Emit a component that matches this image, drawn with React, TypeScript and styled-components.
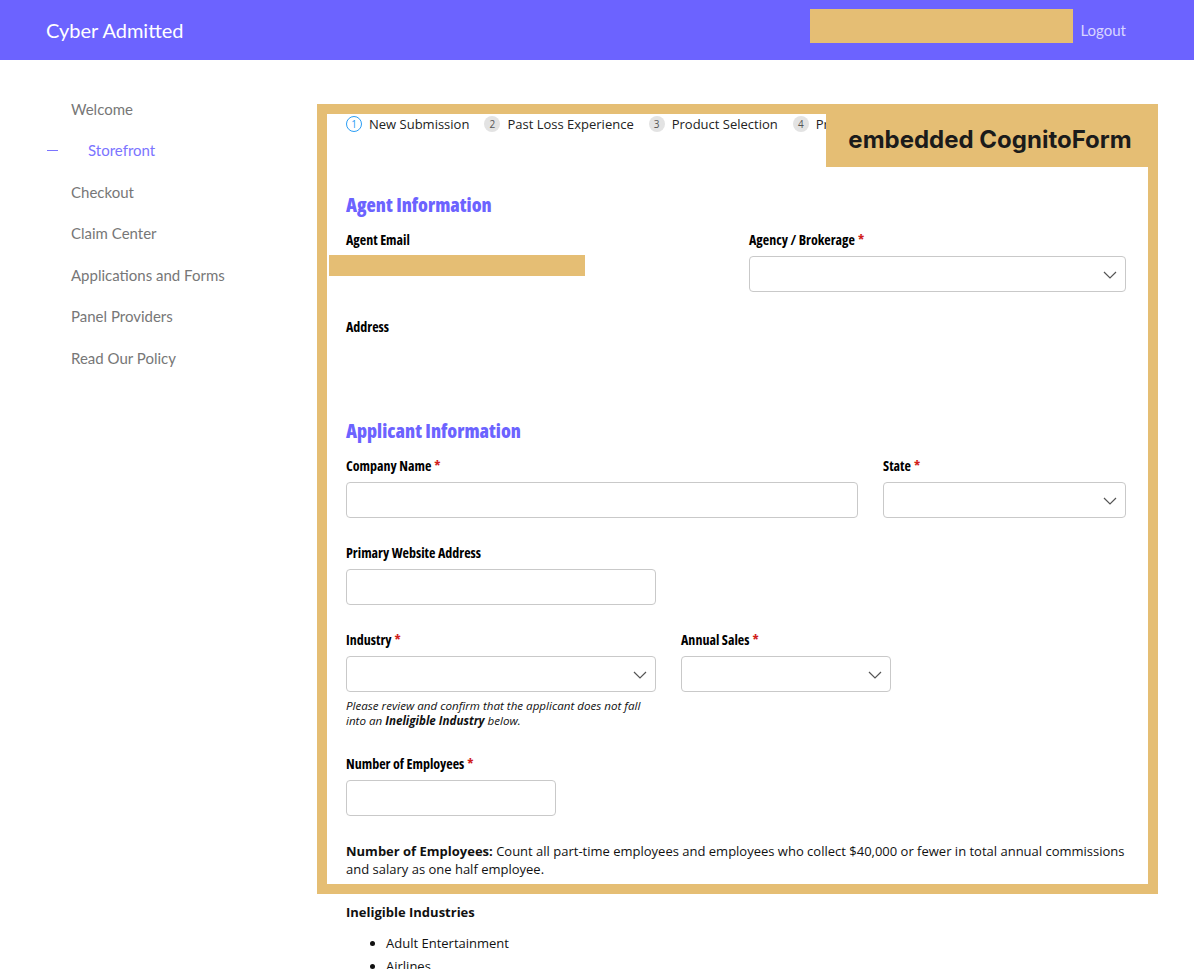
import React from "react";
import styled, { createGlobalStyle } from "styled-components";

const GlobalStyle = createGlobalStyle`
  html, body { margin: 0; padding: 0; background: #fff; }
  body { font-family: Lato, "Open Sans", sans-serif; }
  * { box-sizing: border-box; }
`;

const PURPLE = "#6c63ff";
const GOLD = "#e5be74";
const SANS = `"Open Sans", "Liberation Sans", sans-serif`;

const Header = styled.header`
  height: 60px;
  background: ${PURPLE};
  display: flex;
  align-items: center;
  padding: 0 68px 0 46px;
`;
const Brand = styled.div`
  font-family: Lato, sans-serif;
  font-size: 20px;
  color: #fff;
  flex: 1;
  margin-bottom: 1px;
`;
const Redact = styled.div<{ $w: number; $h: number }>`
  width: ${(p) => p.$w}px;
  height: ${(p) => p.$h}px;
  background: ${GOLD};
  margin-top: -8px;
`;
const Logout = styled.a`
  font-family: Lato, sans-serif;
  font-size: 15px;
  color: #d9d6ff;
  margin-left: 7px;
`;

const Body = styled.div`
  display: flex;
  align-items: flex-start;
`;
const Sidebar = styled.nav`
  width: 317px;
  flex: none;
  padding-top: 28px;
  display: flex;
  flex-direction: column;
`;
const NavItem = styled.div<{ $active?: boolean }>`
  height: 41.5px;
  display: flex;
  align-items: center;
  font-family: Lato, sans-serif;
  font-size: 15px;
  color: ${(p) => (p.$active ? "#7b74ff" : "#777")};
  padding-left: ${(p) => (p.$active ? "47px" : "71px")};
`;
const Dash = styled.span`
  width: 11px;
  height: 1px;
  background: #7b74ff;
  margin-right: 30px;
`;

const Main = styled.main`
  width: 841px;
  margin-top: 44px;
`;
const Frame = styled.div`
  position: relative;
  border: 10px solid ${GOLD};
  font-family: ${SANS};
  color: #000;
`;
const FrameInner = styled.div`
  padding: 0 22px 6px 19px;
`;
const EmbedTag = styled.div`
  position: absolute;
  top: -10px;
  right: -10px;
  width: 332px;
  height: 63px;
  background: ${GOLD};
  display: flex;
  align-items: center;
  justify-content: center;
  font-family: Inter, sans-serif;
  font-weight: 700;
  font-size: 24px;
  color: #1b1b1b;
  padding: 8px 4px 0 0;
`;

const Stepper = styled.div`
  height: 20px;
  display: flex;
  align-items: center;
  gap: 15px;
  font-family: ${SANS};
  font-size: 13px;
  color: #222;
  white-space: nowrap;
  overflow: hidden;
`;
const Step = styled.div`
  display: flex;
  align-items: center;
  gap: 7px;
`;
const StepNum = styled.span<{ $current?: boolean }>`
  width: 16px;
  height: 16px;
  border-radius: 50%;
  display: inline-flex;
  align-items: center;
  justify-content: center;
  font-size: 10px;
  line-height: 1;
  background: ${(p) => (p.$current ? "#fff" : "#e3e3e3")};
  border: ${(p) => (p.$current ? "1.5px solid #2a9df4" : "none")};
  color: ${(p) => (p.$current ? "#2a9df4" : "#555")};
`;

const SectionTitle = styled.h2<{ $mt: number }>`
  margin: ${(p) => p.$mt}px 0 11px;
  font-family: ${SANS};
  font-stretch: 75%;
  font-weight: 800;
  font-size: 19.2px;
  line-height: 30px;
  color: ${PURPLE};
`;
const Row = styled.div<{ $cols: string; $mb?: number }>`
  display: grid;
  grid-template-columns: ${(p) => p.$cols};
  column-gap: 25px;
  margin-bottom: ${(p) => p.$mb ?? 26}px;
`;
const Field = styled.div`
  display: flex;
  flex-direction: column;
`;
const Label = styled.label`
  font-stretch: 75%;
  font-weight: 700;
  font-size: 14px;
  line-height: 18px;
  margin-bottom: 7px;
`;
const Req = styled.span`
  color: #d0201b;
  margin-left: 3px;
`;
const Input = styled.div`
  height: 36px;
  border: 1px solid #c9c9c9;
  border-radius: 4px;
  background: #fff;
  position: relative;
`;
const Chevron = styled.svg`
  position: absolute;
  right: 7px;
  top: 13px;
`;
const EmailRedact = styled.div`
  margin: -1px 0 0 -17px;
  width: 256px;
  height: 21px;
  background: ${GOLD};
`;
const Help = styled.p`
  margin: 6px 0 0;
  padding-right: 10px;
  font-style: italic;
  font-size: 11.6px;
  line-height: 15px;
  color: #111;
`;
const Para = styled.p`
  margin: 0;
  font-size: 13px;
  line-height: 18px;
  color: #111;
`;

const Below = styled.div`
  padding: 9px 0 0 29px;
  font-family: ${SANS};
  font-size: 13px;
  color: #111;
`;
const BelowTitle = styled.div`
  font-weight: 700;
  line-height: 18px;
`;
const List = styled.ul`
  margin: 11px 0 0;
  padding-left: 40px;
  li { line-height: 23px; }
`;

const Select = () => (
  <Input>
    <Chevron width="16" height="10" viewBox="0 0 16 10">
      <path d="M2 2 L8 8 L14 2" fill="none" stroke="#555" strokeWidth="1.2" />
    </Chevron>
  </Input>
);

export default function App() {
  return (
    <>
      <GlobalStyle />
      <Header>
        <Brand>Cyber Admitted</Brand>
        <Redact $w={263} $h={34} />
        <Logout>Logout</Logout>
      </Header>
      <Body>
        <Sidebar>
          <NavItem>Welcome</NavItem>
          <NavItem $active>
            <Dash />
            Storefront
          </NavItem>
          <NavItem>Checkout</NavItem>
          <NavItem>Claim Center</NavItem>
          <NavItem>Applications and Forms</NavItem>
          <NavItem>Panel Providers</NavItem>
          <NavItem>Read Our Policy</NavItem>
        </Sidebar>
        <Main>
          <Frame>
            <EmbedTag>embedded CognitoForm</EmbedTag>
            <FrameInner>
              <Stepper>
                <Step>
                  <StepNum $current>1</StepNum>New Submission
                </Step>
                <Step>
                  <StepNum>2</StepNum>Past Loss Experience
                </Step>
                <Step>
                  <StepNum>3</StepNum>Product Selection
                </Step>
                <Step>
                  <StepNum>4</StepNum>Premium Indication
                </Step>
              </Stepper>

              <SectionTitle $mt={56}>Agent Information</SectionTitle>
              <Row $cols="378px 377px">
                <Field>
                  <Label>Agent Email</Label>
                  <EmailRedact />
                </Field>
                <Field>
                  <Label>
                    Agency / Brokerage<Req>*</Req>
                  </Label>
                  <Select />
                </Field>
              </Row>
              <Row $cols="378px" $mb={0}>
                <Field>
                  <Label>Address</Label>
                </Field>
              </Row>

              <SectionTitle $mt={73}>Applicant Information</SectionTitle>
              <Row $cols="512px 243px">
                <Field>
                  <Label>
                    Company Name<Req>*</Req>
                  </Label>
                  <Input />
                </Field>
                <Field>
                  <Label>
                    State<Req>*</Req>
                  </Label>
                  <Select />
                </Field>
              </Row>
              <Row $cols="310px">
                <Field>
                  <Label>Primary Website Address</Label>
                  <Input />
                </Field>
              </Row>
              <Row $cols="310px 210px" $mb={26.5}>
                <Field>
                  <Label>
                    Industry<Req>*</Req>
                  </Label>
                  <Select />
                  <Help>
                    Please review and confirm that the applicant does not fall into an{" "}
                    <b>Ineligible Industry</b> below.
                  </Help>
                </Field>
                <Field>
                  <Label>
                    Annual Sales<Req>*</Req>
                  </Label>
                  <Select />
                </Field>
              </Row>
              <Row $cols="210px">
                <Field>
                  <Label>
                    Number of Employees<Req>*</Req>
                  </Label>
                  <Input />
                </Field>
              </Row>
              <Para>
                <b>Number of Employees:</b> Count all part-time employees and employees who
                collect $40,000 or fewer in total annual commissions and salary as one half
                employee.
              </Para>
            </FrameInner>
          </Frame>
          <Below>
            <BelowTitle>Ineligible Industries</BelowTitle>
            <List>
              <li>Adult Entertainment</li>
              <li>Airlines</li>
            </List>
          </Below>
        </Main>
      </Body>
    </>
  );
}
